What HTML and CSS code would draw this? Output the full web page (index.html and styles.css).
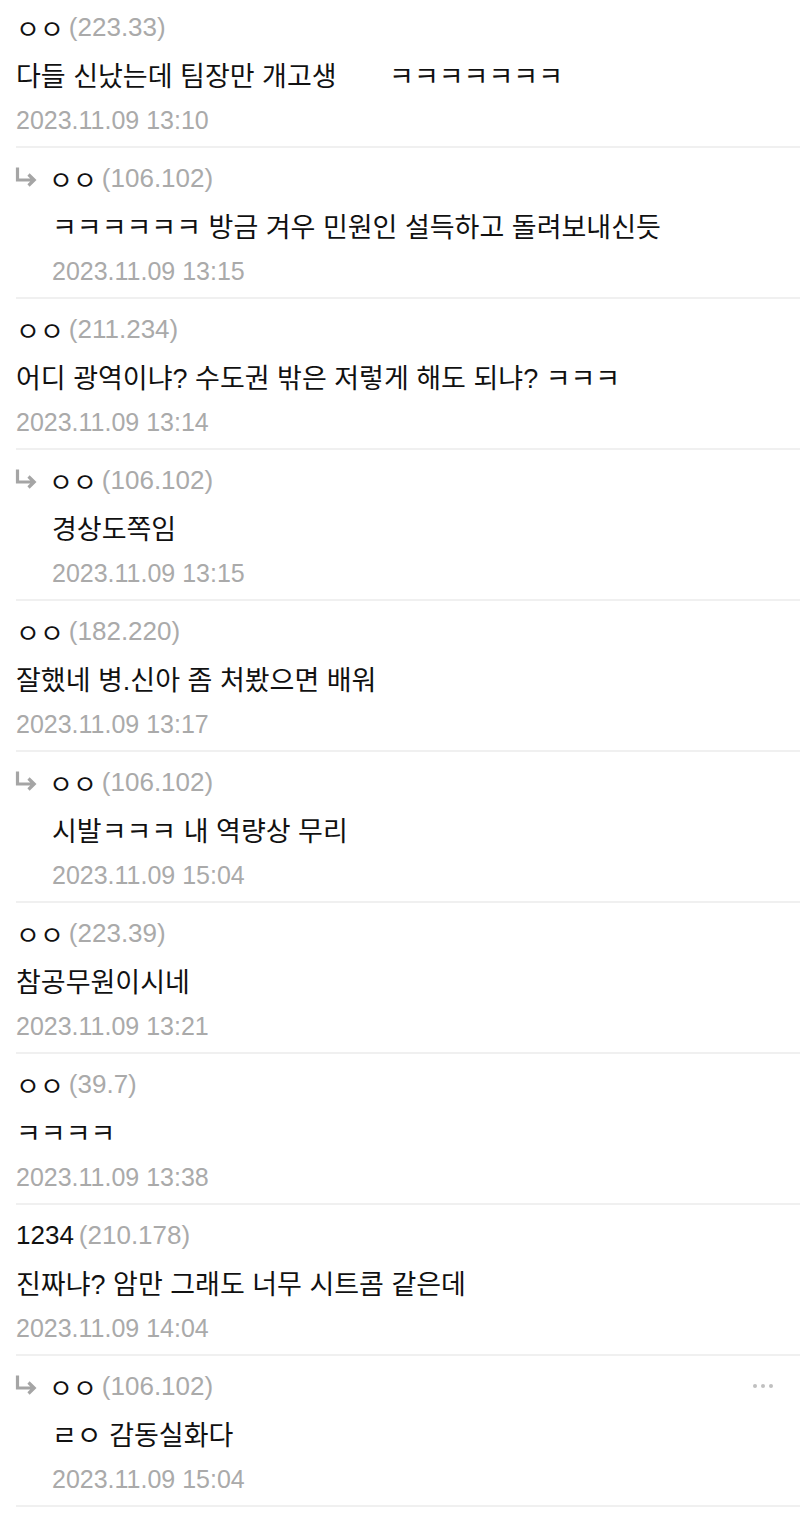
FILE: index.html
```html
<!DOCTYPE html>
<html>
<head>
    <title>댓글</title>
    <link rel="stylesheet" href="styles.css">
</head>
<body>
    <ul class="comments">
        <li class="comment">
            <div class="meta"><span class="nick">ㅇㅇ</span><span class="ip">(223.33)</span></div>
            <p class="text">다들 신났는데 팀장만 개고생       ㅋㅋㅋㅋㅋㅋㅋ</p>
            <div class="date">2023.11.09 13:10</div>
        </li>
        <li class="comment reply">
            <div class="meta">
                <svg class="reply-icon" viewBox="0 0 22 22"><path d="M2.5 0.5 V13 H19 M13.5 7.5 L19.2 13 L13.5 18.5"/></svg>
                <span class="nick">ㅇㅇ</span>
                <span class="ip">(106.102)</span>
            </div>
            <p class="text">ㅋㅋㅋㅋㅋㅋ 방금 겨우 민원인 설득하고 돌려보내신듯</p>
            <div class="date">2023.11.09 13:15</div>
        </li>
        <li class="comment">
            <div class="meta"><span class="nick">ㅇㅇ</span><span class="ip">(211.234)</span></div>
            <p class="text">어디 광역이냐? 수도권 밖은 저렇게 해도 되냐? ㅋㅋㅋ</p>
            <div class="date">2023.11.09 13:14</div>
        </li>
        <li class="comment reply">
            <div class="meta">
                <svg class="reply-icon" viewBox="0 0 22 22"><path d="M2.5 0.5 V13 H19 M13.5 7.5 L19.2 13 L13.5 18.5"/></svg>
                <span class="nick">ㅇㅇ</span>
                <span class="ip">(106.102)</span>
            </div>
            <p class="text">경상도쪽임</p>
            <div class="date">2023.11.09 13:15</div>
        </li>
        <li class="comment">
            <div class="meta"><span class="nick">ㅇㅇ</span><span class="ip">(182.220)</span></div>
            <p class="text">잘했네 병.신아 좀 처봤으면 배워</p>
            <div class="date">2023.11.09 13:17</div>
        </li>
        <li class="comment reply">
            <div class="meta">
                <svg class="reply-icon" viewBox="0 0 22 22"><path d="M2.5 0.5 V13 H19 M13.5 7.5 L19.2 13 L13.5 18.5"/></svg>
                <span class="nick">ㅇㅇ</span>
                <span class="ip">(106.102)</span>
            </div>
            <p class="text">시발ㅋㅋㅋ 내 역량상 무리</p>
            <div class="date">2023.11.09 15:04</div>
        </li>
        <li class="comment">
            <div class="meta"><span class="nick">ㅇㅇ</span><span class="ip">(223.39)</span></div>
            <p class="text">참공무원이시네</p>
            <div class="date">2023.11.09 13:21</div>
        </li>
        <li class="comment">
            <div class="meta"><span class="nick">ㅇㅇ</span><span class="ip">(39.7)</span></div>
            <p class="text">ㅋㅋㅋㅋ</p>
            <div class="date">2023.11.09 13:38</div>
        </li>
        <li class="comment">
            <div class="meta"><span class="nick">1234</span><span class="ip">(210.178)</span></div>
            <p class="text">진짜냐? 암만 그래도 너무 시트콤 같은데</p>
            <div class="date">2023.11.09 14:04</div>
        </li>
        <li class="comment reply">
            <div class="meta">
                <svg class="reply-icon" viewBox="0 0 22 22"><path d="M2.5 0.5 V13 H19 M13.5 7.5 L19.2 13 L13.5 18.5"/></svg>
                <span class="nick">ㅇㅇ</span>
                <span class="ip">(106.102)</span>
                <span class="more"><i></i><i></i><i></i></span>
            </div>
            <p class="text">ㄹㅇ 감동실화다</p>
            <div class="date">2023.11.09 15:04</div>
        </li>
    </ul>
</body>
</html>
```

FILE: styles.css
```css
body { margin: 0; background: #fff; font-family: "Liberation Sans", "Noto Sans CJK KR", sans-serif; color: #111; }
.comments { list-style: none; margin: -3px 0 0; padding: 0 0 0 16px; }
.comment { padding: 7px 0 6px; border-bottom: 2px solid #f0f0f0; }
.reply { padding-left: 36px; }
.meta { display: flex; align-items: center; gap: 5px; height: 46px; font-size: 26px; }
.nick { color: #111; }
.ip { color: #aaa; }
.reply-icon { width: 22px; height: 22px; margin-left: -37px; margin-right: 7px; fill: none; stroke: #a5a5a5; stroke-width: 3.2; }
.more { margin-left: auto; margin-right: 27px; display: flex; gap: 4px; }
.more i { width: 4px; height: 4px; border-radius: 50%; background: #c0c0c0; }
.text { margin: 0; padding-top: 4px; height: 47px; line-height: 47px; font-size: 27px; white-space: pre; }
.date { height: 39px; line-height: 39px; font-size: 25px; color: #aaa; }
```
